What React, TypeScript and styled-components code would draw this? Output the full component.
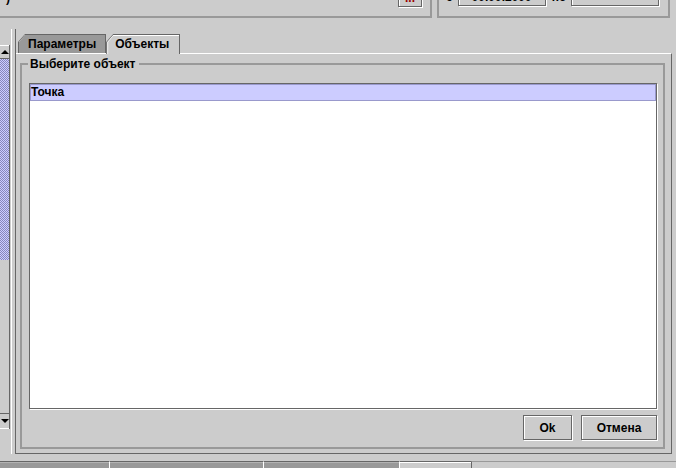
import React from 'react';
import styled, { createGlobalStyle, css } from 'styled-components';

const GlobalStyle = createGlobalStyle`
  html, body {
    margin: 0;
    padding: 0;
    background: #cccccc;
  }
`;

const flush3D = css`
  box-sizing: border-box;
  border: 1px solid #666666;
  box-shadow: inset 1px 1px 0 #ffffff, 1px 1px 0 #ffffff;
`;

const Root = styled.div`
  width: 676px;
  height: 468px;
  overflow: hidden;
  background: #cccccc;
  display: flex;
  flex-direction: column;
  font: bold 12px 'Liberation Sans', Arial, sans-serif;
  color: #000;
`;

const TopBar = styled.div`
  height: 18px;
  display: flex;
  flex-shrink: 0;
`;

const TopPanel = styled.div<{ $w: number; $left?: boolean }>`
  box-sizing: border-box;
  width: ${({ $w }) => $w}px;
  height: 18px;
  margin-left: ${({ $left }) => ($left ? 0 : 5)}px;
  border-bottom: 2px solid #999999;
  border-right: 2px solid #999999;
  border-left: ${({ $left }) => ($left ? 'none' : '2px solid #999999')};
  display: flex;
  align-items: flex-end;
  overflow: hidden;
`;

const Label = styled.span<{ $ml?: number; $mb?: number }>`
  line-height: 12px;
  margin: 0 0 ${({ $mb }) => $mb ?? 13}px ${({ $ml }) => $ml ?? 0}px;
  white-space: nowrap;
`;

const Spacer = styled.div`
  flex: 1;
`;

const DotsButton = styled.div`
  ${flush3D};
  flex-shrink: 0;
  width: 24px;
  height: 25px;
  margin: 0 8px 9px 0;
  display: flex;
  align-items: flex-end;
  justify-content: center;
  padding-bottom: 2px;
  line-height: 12px;
  color: #990000;
`;

const DateField = styled.div<{ $ml: number }>`
  ${flush3D};
  flex-shrink: 0;
  width: 88px;
  height: 22px;
  margin: 0 0 10px ${({ $ml }) => $ml}px;
  display: flex;
  align-items: flex-end;
  justify-content: center;
  padding-bottom: 2px;
  line-height: 12px;
`;

const Main = styled.div`
  flex: 1;
  display: flex;
  min-height: 0;
`;

const LeftColumn = styled.div`
  width: 10px;
  flex-shrink: 0;
  padding-top: 27px;
`;

const ScrollBar = styled.div`
  box-sizing: border-box;
  height: 384px;
  border-right: 1px solid #666666;
  display: flex;
  flex-direction: column;
`;

const ArrowButton = styled.div<{ $down?: boolean; $h: number }>`
  height: ${({ $h }) => $h}px;
  box-sizing: border-box;
  display: flex;
  align-items: center;
  justify-content: center;
  border-top: 1px solid ${({ $down }) => ($down ? '#666666' : '#ffffff')};
  border-bottom: 1px solid ${({ $down }) => ($down ? '#ffffff' : '#666666')};
  &::after {
    content: '';
    width: 0;
    height: 0;
    border-left: 4px solid transparent;
    border-right: 4px solid transparent;
    ${({ $down }) =>
      $down
        ? 'border-top: 4px solid #000;'
        : 'border-bottom: 4px solid #000;'}
  }
`;

const Thumb = styled.div`
  height: 201px;
  background: repeating-conic-gradient(#8888bb 0 25%, #ccccff 0 50%) 0 0 / 2px 2px;
`;

const Track = styled.div`
  flex: 1;
`;

const Divider = styled.div`
  box-sizing: border-box;
  flex-shrink: 0;
  width: 5px;
  height: 425px;
  margin: 11px 0 0 1px;
  border-left: 1px solid #ffffff;
  border-right: 1px solid #666666;
`;

const TabPane = styled.div`
  width: 656px;
  height: 425px;
  margin-top: 11px;
  display: flex;
  flex-direction: column;
`;

const TabRow = styled.div`
  position: relative;
  z-index: 1;
  box-sizing: border-box;
  height: 24px;
  padding: 5px 0 0 2px;
  display: flex;
  align-items: flex-end;
`;

const TabOutline = styled.div<{ $active?: boolean }>`
  box-sizing: border-box;
  height: ${({ $active }) => ($active ? 20 : 19)}px;
  margin-bottom: ${({ $active }) => ($active ? -1 : 0)}px;
  padding: 1px 1px 0 1px;
  background: #666666;
  clip-path: polygon(0 100%, 0 8px, 7px 0, 100% 0, 100% 100%);
`;

const TabHighlight = styled.div<{ $active?: boolean }>`
  box-sizing: border-box;
  height: 100%;
  padding: ${({ $active }) => ($active ? '1px 0 0 1px' : '0')};
  background: #ffffff;
  clip-path: polygon(0 100%, 0 7px, 6px 0, 100% 0, 100% 100%);
`;

const TabFace = styled.div<{ $active?: boolean }>`
  box-sizing: border-box;
  height: 100%;
  padding: 0 ${({ $active }) => ($active ? 10 : 9)}px 0 ${({ $active }) => ($active ? 7 : 9)}px;
  line-height: ${({ $active }) => ($active ? 17 : 18)}px;
  background: ${({ $active }) => ($active ? '#cccccc' : '#999999')};
  clip-path: polygon(0 100%, 0 6px, 5px 0, 100% 0, 100% 100%);
  white-space: nowrap;
`;

const TabContent = styled.div`
  flex: 1;
  min-height: 0;
  display: flex;
  flex-direction: column;
  border-top: 1px solid #ffffff;
  border-right: 1px solid #666666;
  border-bottom: 1px solid #666666;
  padding: 3px 6px 4px 4px;
`;

const Group = styled.fieldset`
  flex: 1;
  min-width: 0;
  min-height: 0;
  margin: 0;
  display: flex;
  flex-direction: column;
  border: 2px solid #999999;
  padding: 12px 6px 7px 7px;
`;

const GroupTitle = styled.legend`
  margin-left: -1px;
  padding: 0 4px 0 2px;
  line-height: 14px;
`;

const ListBox = styled.div`
  flex: 1;
  min-height: 0;
  box-sizing: border-box;
  background: #ffffff;
  border: 1px solid #666666;
  box-shadow: 1px 1px 0 #ffffff;
  display: flex;
  flex-direction: column;
`;

const ListRow = styled.div<{ $selected?: boolean }>`
  box-sizing: border-box;
  height: 17px;
  line-height: 14px;
  background: ${({ $selected }) => ($selected ? '#ccccff' : '#ffffff')};
  border: 1px solid ${({ $selected }) => ($selected ? '#9999cc' : '#ffffff')};
`;

const ButtonRow = styled.div`
  display: flex;
  justify-content: flex-end;
  gap: 9px;
  margin-top: 6px;
`;

const Button = styled.div<{ $w: number }>`
  ${flush3D};
  width: ${({ $w }) => $w}px;
  height: 25px;
  display: flex;
  align-items: center;
  justify-content: center;
`;

const BottomBar = styled.div`
  height: 7px;
  flex-shrink: 0;
  display: flex;
`;

const BottomTab = styled.div<{ $w: number; $active?: boolean; $first?: boolean }>`
  box-sizing: border-box;
  width: ${({ $w }) => $w}px;
  background: ${({ $active }) => ($active ? '#cccccc' : '#999999')};
  border-top: 1px solid #666666;
  border-left: ${({ $first }) => ($first ? 'none' : '1px solid #ffffff')};
  box-shadow: inset 0 1px 0 ${({ $active }) => ($active ? '#ffffff' : '#b3b3b3')};
`;

const BottomRest = styled.div`
  flex: 1;
  border-top: 1px solid #999999;
  border-left: 1px solid #666666;
`;

export default function App() {
  return (
    <Root>
      <GlobalStyle />
      <TopBar>
        <TopPanel $w={432} $left>
          <Label $ml={6} $mb={12}>)</Label>
          <Spacer />
          <DotsButton>...</DotsButton>
        </TopPanel>
        <TopPanel $w={233}>
          <Label $ml={7}>с</Label>
          <DateField $ml={5}>00.00.2000</DateField>
          <Label $ml={6}>по</Label>
          <DateField $ml={5} />
        </TopPanel>
      </TopBar>

      <Main>
        <LeftColumn>
          <ScrollBar>
            <ArrowButton $h={14} />
            <Thumb />
            <Track />
            <ArrowButton $h={16} $down />
          </ScrollBar>
        </LeftColumn>
        <Divider />
        <TabPane>
          <TabRow>
            <TabOutline>
              <TabHighlight>
                <TabFace>Параметры</TabFace>
              </TabHighlight>
            </TabOutline>
            <TabOutline $active>
              <TabHighlight $active>
                <TabFace $active>Объекты</TabFace>
              </TabHighlight>
            </TabOutline>
          </TabRow>
          <TabContent>
            <Group>
              <GroupTitle>Выберите объект</GroupTitle>
              <ListBox>
                <ListRow $selected>Точка</ListRow>
              </ListBox>
              <ButtonRow>
                <Button $w={49}>Ok</Button>
                <Button $w={76}>Отмена</Button>
              </ButtonRow>
            </Group>
          </TabContent>
        </TabPane>
      </Main>

      <BottomBar>
        <BottomTab $w={109} $first />
        <BottomTab $w={154} />
        <BottomTab $w={136} />
        <BottomTab $w={72} $active />
        <BottomRest />
      </BottomBar>
    </Root>
  );
}
